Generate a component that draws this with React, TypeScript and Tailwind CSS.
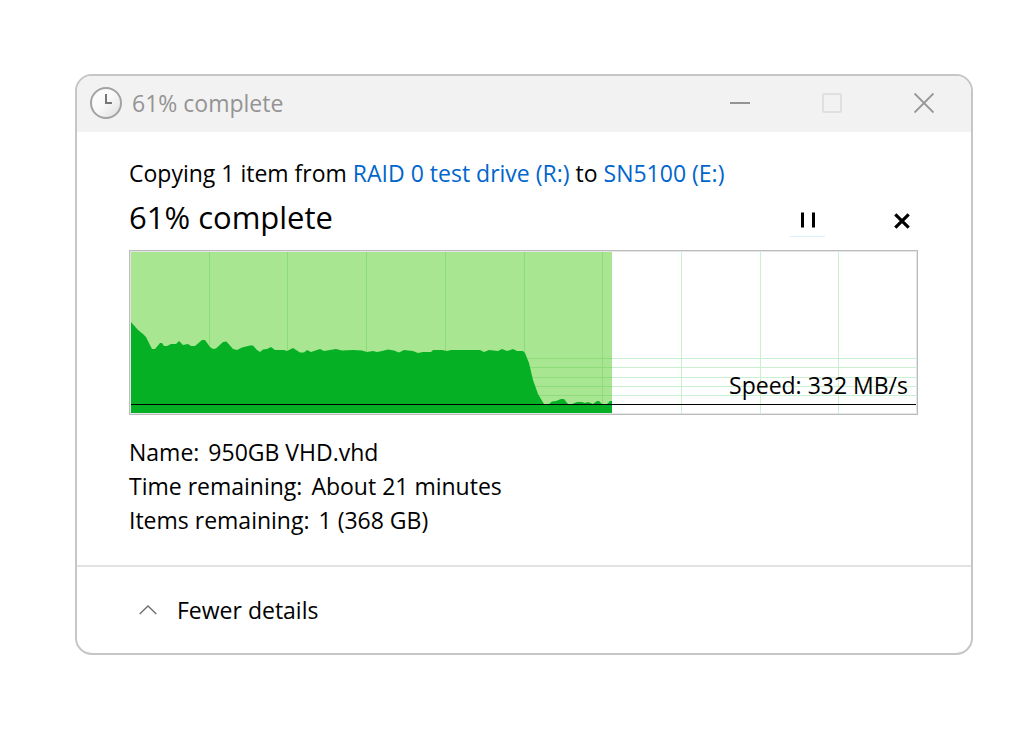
const SPEED_CURVE =
  'M0 70 L7 78 L12 82 L15 85 L20 95 L21 97 H24 L29 91 H31 L33 94 H36 L40 92 H45 L48 89 L52 93 L57 92 L60 94 H64 L71 88 H74 L79 95 L82 97 L85 96.5 L92 90 L95.5 89.5 L102 97 L106 98 L111 95.5 L119 93.5 H122 L126 98 L129 100 L132 97.5 L136 97 L140 95 L144 98 H153 L156 99 L162 96 L169 100.5 H173 L176 98 L180 100 L189 97 L193 99 L205 97 L211 98.5 L222 98 L231 98.5 L236 100 L242 99 L246 100 L251 99 L257 97.5 L263 98.5 L268 100.5 L273 98 L282 99 L287 101 L292 100 H300 L302 98 H311 L316 99 L320 98 H349 L353 100 L358 98 L367 99 L371 97 L376 99 L382 97 L386 99 H392 L394 101 L398 111 L402 128 L407 142 L413 152 H418 L421 149.5 L425 149 L430 147 H433 L437 152 H441 L446 150 H451 L454 151 L457 150 L462 152 L466 149 H468 L471 152 H476 L479 149 H481 V161 H0 Z';

const COLUMNS = [78, 156, 235, 314, 393, 471, 550, 629, 707];
const ROWS = [106, 115, 125, 134, 143];

function SpeedChart() {
  return (
    <div className="relative border border-[#bcbcbc]">
      <div className="border border-[#e4e4e4]">
        <svg
          viewBox="0 0 785 161"
          preserveAspectRatio="none"
          className="block h-[161px] w-full"
          role="img"
          aria-label="Transfer speed"
        >
          <rect width="785" height="161" fill="#fff" />
          <g fill="#c9f0d0" shapeRendering="crispEdges">
            {COLUMNS.map((x) => (
              <rect key={x} x={x} width="1" height="161" />
            ))}
            {ROWS.map((y) => (
              <rect key={y} y={y} width="785" height="1" />
            ))}
          </g>
          <rect width="481" height="161" fill="#a8e692" shapeRendering="crispEdges" />
          <g fill="#8cdc7a" shapeRendering="crispEdges">
            {COLUMNS.filter((x) => x < 481).map((x) => (
              <rect key={x} x={x} width="1" height="161" />
            ))}
            {ROWS.map((y) => (
              <rect key={y} y={y} width="481" height="1" />
            ))}
          </g>
          <path d={SPEED_CURVE} fill="#06b025" />
          <rect y="152" width="785" height="1" fill="#000" shapeRendering="crispEdges" />
        </svg>
      </div>
      <p className="absolute right-[9px] bottom-[12px] leading-[34px]">Speed: 332 MB/s</p>
    </div>
  );
}

function TitleBar() {
  return (
    <header className="flex h-[56px] items-center bg-[#f2f2f2] pb-[2px] pl-[13px]">
      <svg width="32" height="32" viewBox="0 0 32 32" aria-hidden="true">
        <defs>
          <linearGradient id="dial" x1="0" y1="0" x2="1" y2="1">
            <stop offset="0" stopColor="#fff" />
            <stop offset="0.5" stopColor="#f8f8f8" />
            <stop offset="1" stopColor="#dcdcdc" />
          </linearGradient>
        </defs>
        <circle cx="16" cy="16" r="15" fill="url(#dial)" stroke="#a3a3a3" strokeWidth="2" />
        <path d="M16 7V16H22" fill="none" stroke="#777" strokeWidth="2" />
      </svg>
      <h1 className="ml-[10px] grow leading-[34px] text-[#949494]">61% complete</h1>
      <div className="mr-[1px] flex">
        <button type="button" aria-label="Minimize" className="flex h-[54px] w-[92px] items-center justify-center">
          <svg width="20" height="20" viewBox="0 0 20 20">
            <path d="M0 10H20" stroke="#949494" strokeWidth="2" />
          </svg>
        </button>
        <button type="button" aria-label="Maximize" disabled className="flex h-[54px] w-[92px] items-center justify-center">
          <svg width="20" height="20" viewBox="0 0 20 20">
            <rect x="1" y="1" width="18" height="18" rx="1.5" fill="none" stroke="#dfdfdf" strokeWidth="2" />
          </svg>
        </button>
        <button type="button" aria-label="Close" className="flex h-[54px] w-[92px] items-center justify-center">
          <svg width="20" height="20" viewBox="0 0 20 20">
            <path d="M0.5 0.5L19.5 19.5M19.5 0.5L0.5 19.5" stroke="#949494" strokeWidth="1.9" />
          </svg>
        </button>
      </div>
    </header>
  );
}

export default function App() {
  return (
    <div className="min-h-screen bg-white pt-[74px] pr-[53px] pb-[74px] pl-[75px] font-['Open_Sans','Noto_Sans',sans-serif] text-[23px] text-black">
      <section className="overflow-hidden rounded-[17px] border-2 border-[#c6c6c6] bg-white">
        <TitleBar />
        <main className="pt-[24px] pr-[53px] pb-[28px] pl-[52px]">
          <p className="leading-[34px]">
            Copying 1 item from{' '}
            <a href="#source" className="text-[#0066cc]">RAID 0 test drive (R:)</a> to{' '}
            <a href="#target" className="text-[#0066cc]">SN5100 (E:)</a>
          </p>
          <div className="flex h-[60px] items-start">
            <h2 className="mt-[7px] grow text-[31px] leading-[40px]">61% complete</h2>
            <button
              type="button"
              aria-label="Pause"
              className="mt-[13px] flex h-[34px] w-[35px] items-center justify-center border-b border-[#d9effb]"
            >
              <svg width="16" height="16" viewBox="0 0 16 16">
                <path d="M2.5 0.5V15.5M13.5 0.5V15.5" stroke="#000" strokeWidth="3" />
              </svg>
            </button>
            <button type="button" aria-label="Cancel" className="mt-[15px] ml-[61px] flex h-8 w-8 items-center justify-center">
              <svg width="16" height="16" viewBox="0 0 16 16">
                <path d="M1.3 1.3L14.7 14.7M14.7 1.3L1.3 14.7" stroke="#000" strokeWidth="3.2" />
              </svg>
            </button>
          </div>
          <SpeedChart />
          <dl className="mt-[20px] leading-[34px]">
            <div className="flex gap-[9px]">
              <dt>Name:</dt>
              <dd>950GB VHD.vhd</dd>
            </div>
            <div className="flex gap-[9px]">
              <dt>Time remaining:</dt>
              <dd>About 21 minutes</dd>
            </div>
            <div className="flex gap-[9px]">
              <dt>Items remaining:</dt>
              <dd>1 (368 GB)</dd>
            </div>
          </dl>
        </main>
        <footer className="flex h-[88px] items-center border-t-2 border-[#e2e2e2] px-[62px]">
          <button type="button" className="flex items-center gap-[20px] leading-[34px]">
            <svg width="18" height="10" viewBox="0 0 18 10" aria-hidden="true">
              <path d="M0.7 9L9 1L17.3 9" fill="none" stroke="#6f6f6f" strokeWidth="1.4" />
            </svg>
            Fewer details
          </button>
        </footer>
      </section>
    </div>
  );
}
